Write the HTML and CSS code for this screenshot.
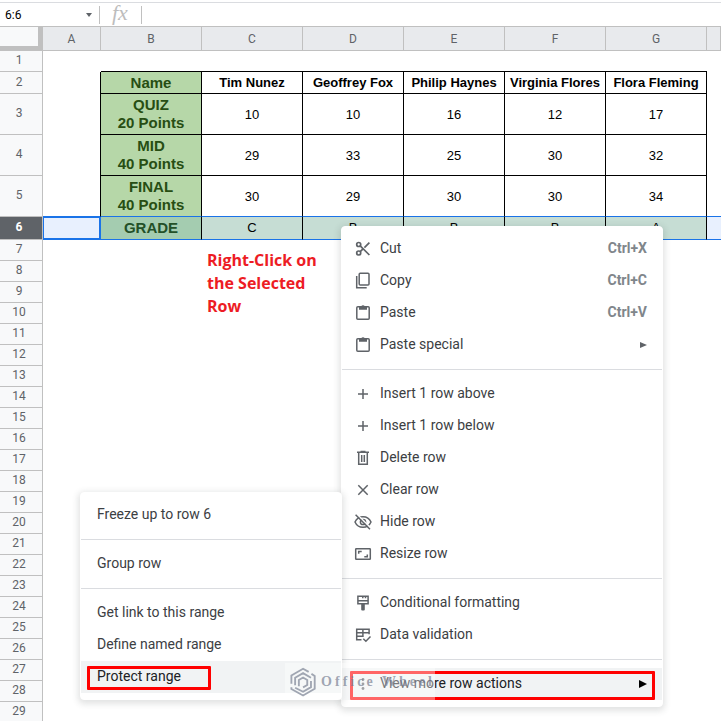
FILE: index.html
```html
<!DOCTYPE html>
<html lang="en">
<head>
<meta charset="utf-8">
<title>Grades</title>
<link rel="stylesheet" href="styles.css">
</head>
<body>
<div class="formula-bar">
  <label class="name-box"><input type="text" value="6:6" aria-label="Name box"><svg width="6" height="4" viewBox="0 0 6 4"><path d="M0 0h6L3 4z" fill="#5f6368"/></svg></label>
  <label class="fx" for="formula">fx</label>
  <input class="formula" id="formula" type="text">
</div>
<main class="sheet">
<table class="grid">
  <colgroup><col class="col-head"><col class="col-a"><col class="col"><col class="col"><col class="col"><col class="col"><col class="col"><col class="col"><col></colgroup>
  <thead>
    <tr><th class="corner"></th><th>A</th><th>B</th><th>C</th><th>D</th><th>E</th><th>F</th><th>G</th><th></th></tr>
  </thead>
  <tbody>
    <tr class="lead"><th>1</th><td></td><td></td><td></td><td></td><td></td><td></td><td></td><td></td></tr>
    <tr class="names"><th>2</th><td></td><td>Name</td><td>Tim Nunez</td><td>Geoffrey Fox</td><td>Philip Haynes</td><td>Virginia Flores</td><td>Flora Fleming</td><td></td></tr>
    <tr class="marks"><th>3</th><td></td><td>QUIZ<br>20 Points</td><td>10</td><td>10</td><td>16</td><td>12</td><td>17</td><td></td></tr>
    <tr class="marks"><th>4</th><td></td><td>MID<br>40 Points</td><td>29</td><td>33</td><td>25</td><td>30</td><td>32</td><td></td></tr>
    <tr class="marks last"><th>5</th><td></td><td>FINAL<br>40 Points</td><td>30</td><td>29</td><td>30</td><td>30</td><td>34</td><td></td></tr>
    <tr class="selected"><th>6</th><td></td><td>GRADE</td><td>C</td><td>B</td><td>B</td><td>B</td><td>A</td><td></td></tr>
    <tr><th>7</th><td colspan="8"></td></tr>
    <tr><th>8</th><td colspan="8"></td></tr>
    <tr><th>9</th><td colspan="8"></td></tr>
    <tr><th>10</th><td colspan="8"></td></tr>
    <tr><th>11</th><td colspan="8"></td></tr>
    <tr><th>12</th><td colspan="8"></td></tr>
    <tr><th>13</th><td colspan="8"></td></tr>
    <tr><th>14</th><td colspan="8"></td></tr>
    <tr><th>15</th><td colspan="8"></td></tr>
    <tr><th>16</th><td colspan="8"></td></tr>
    <tr><th>17</th><td colspan="8"></td></tr>
    <tr><th>18</th><td colspan="8"></td></tr>
    <tr><th>19</th><td colspan="8"></td></tr>
    <tr><th>20</th><td colspan="8"></td></tr>
    <tr><th>21</th><td colspan="8"></td></tr>
    <tr><th>22</th><td colspan="8"></td></tr>
    <tr><th>23</th><td colspan="8"></td></tr>
    <tr><th>24</th><td colspan="8"></td></tr>
    <tr><th>25</th><td colspan="8"></td></tr>
    <tr><th>26</th><td colspan="8"></td></tr>
    <tr><th>27</th><td colspan="8"></td></tr>
    <tr><th>28</th><td colspan="8"></td></tr>
    <tr><th>29</th><td colspan="8"></td></tr>
  </tbody>
</table>
</main>

<p class="note">Right-Click on<br>the Selected<br>Row</p>

<div class="menu context-menu">
  <button type="button"><svg viewBox="0 0 18 18"><g fill="none" stroke="#5f6368" stroke-width="1.7"><circle cx="4.700" cy="4.500" r="2"/><circle cx="4.700" cy="13" r="2"/><path d="M6.200 5.900 15.400 15M6.200 11.600 9 8.800M10.400 7.600 15.400 2.700"/></g></svg><span>Cut</span><kbd>Ctrl+X</kbd></button>
  <button type="button"><svg viewBox="0 0 18 18"><g fill="none" stroke="#5f6368" stroke-width="1.5"><rect x="5.200" y="1.300" width="9.800" height="11.600" rx="1"/><path d="M2.700 4v11.700h10"/></g></svg><span>Copy</span><kbd>Ctrl+C</kbd></button>
  <button type="button"><svg viewBox="0 0 18 18"><rect x="2.800" y="2.700" width="12.400" height="12.600" rx="1" fill="none" stroke="#5f6368" stroke-width="1.5"/><path d="M5 2.500h2.200a1.900 1.900 0 0 1 3.600 0H13v3.200H5z" fill="#5f6368"/></svg><span>Paste</span><kbd>Ctrl+V</kbd></button>
  <button type="button"><svg viewBox="0 0 18 18"><rect x="2.800" y="2.700" width="12.400" height="12.600" rx="1" fill="none" stroke="#5f6368" stroke-width="1.5"/><path d="M5 2.500h2.200a1.900 1.900 0 0 1 3.600 0H13v3.200H5z" fill="#5f6368"/></svg><span>Paste special</span><i class="arrow"></i></button>
  <hr>
  <button type="button"><svg viewBox="0 0 18 18"><path d="M9 4v10M4 9h10" stroke="#5f6368" stroke-width="1.5"/></svg><span>Insert 1 row above</span></button>
  <button type="button"><svg viewBox="0 0 18 18"><path d="M9 4v10M4 9h10" stroke="#5f6368" stroke-width="1.5"/></svg><span>Insert 1 row below</span></button>
  <button type="button"><svg viewBox="0 0 18 18"><g fill="none" stroke="#5f6368" stroke-width="1.5"><path d="M3 3.300h12M6.500 2.400h5M4.700 3.300v11.900h8.600V3.300M7.700 6v7M10.300 6v7"/></g></svg><span>Delete row</span></button>
  <button type="button"><svg viewBox="0 0 18 18"><path d="m4.300 4.300 9.400 9.400M13.700 4.300 4.300 13.700" stroke="#5f6368" stroke-width="1.5"/></svg><span>Clear row</span></button>
  <button type="button"><svg viewBox="0 0 18 18"><g fill="none" stroke="#5f6368" stroke-width="1.5"><path d="M1 9c1.500-3.400 4.600-5.300 8-5.300S15.500 5.600 17 9c-1.500 3.400-4.600 5.300-8 5.300S2.500 12.400 1 9z"/><circle cx="9" cy="9" r="2.600"/></g><path d="M3 1.200 17 15.200" stroke="#fff" stroke-width="1.500"/><path d="M1.600 1.800 16 16.200" stroke="#5f6368" stroke-width="1.500"/></svg><span>Hide row</span></button>
  <button type="button"><svg viewBox="0 0 18 18"><g fill="none" stroke="#5f6368" stroke-width="1.5"><rect x="1.700" y="3.700" width="14.600" height="10.600" rx=".6"/><path d="M4.700 8.700V6.500h3M13.300 9.400v2.300h-3"/></g></svg><span>Resize row</span></button>
  <hr>
  <button type="button"><svg viewBox="0 0 18 18"><g fill="none" stroke="#5f6368" stroke-width="1.500"><path d="M3.900 2.300h10.200v7.400H3.900zM3.900 6.700h10.200M8.800 2.300v2M11.500 2.300v2"/></g><path d="M7.200 10h3.600v5.400a1 1 0 0 1-1 1H8.200a1 1 0 0 1-1-1z" fill="#5f6368"/></svg><span>Conditional formatting</span></button>
  <button type="button"><svg viewBox="0 0 18 18"><g fill="none" stroke="#5f6368" stroke-width="1.500"><path d="M7.500 13.700H2.700V3.200h12.400v5M2.700 6.700h12.400M2.700 10.200h7M8.900 3.200v7M9.300 12.700l2.600 2.600 4.600-4.800"/></g></svg><span>Data validation</span></button>
  <hr>
  <button type="button" class="active"><svg viewBox="0 0 18 18"><g fill="#5f6368"><circle cx="9" cy="4.500" r="1.400"/><circle cx="9" cy="9" r="1.400"/><circle cx="9" cy="13.500" r="1.400"/></g></svg><span>View more row actions</span><i class="arrow"></i></button>
</div>

<div class="menu sub-menu">
  <button type="button">Freeze up to row 6</button>
  <hr>
  <button type="button">Group row</button>
  <hr>
  <button type="button">Get link to this range</button>
  <button type="button">Define named range</button>
  <button type="button" class="active">Protect range</button>
</div>

<div class="frame frame-protect"></div>
<div class="frame frame-more"></div>

<div class="watermark">
  <svg width="28" height="32" viewBox="0 0 28 32"><g fill="none" stroke="#a0a6b2" stroke-width="2"><path d="M1.500 18V9L14 1.800l6 3.400M1.500 21.500v2L14 30.500l12.500-7.200V9.500L23 7.300M5.500 19.500v-8L14 6.500l8.500 5M5.500 22.200 14 26.500l8.500-5V15M9.500 20.500v-6.700L14 11.200l4.500 2.600v5.400L14 21.800"/></g></svg>
  <span>Office Wheel</span>
</div>
</body>
</html>
```
FILE: styles.css
```css
* { box-sizing: border-box; }

body {
  margin: 0;
  position: relative;
  min-height: 100vh;
  overflow: hidden;
  background: #fff;
  color: #000;
  font-family: Roboto, "Liberation Sans", sans-serif;
}

input, button {
  border: 0;
  padding: 0;
  background: none;
  font: inherit;
  color: inherit;
  outline: 0;
}

.formula-bar {
  display: flex;
  align-items: center;
  height: 25px;
  margin-top: 2px;
  border-top: 1px solid #dadce0;
  border-bottom: 1px solid #c0c0c0;
}

.name-box {
  display: flex;
  align-items: center;
  width: 100px;
  height: 18px;
  padding: 0 7px 0 5px;
  border-right: 1px solid #c0c0c0;
  font-size: 12px;
}

.name-box input { flex: 1; min-width: 0; }

.fx {
  width: 42px;
  height: 18px;
  padding-left: 12px;
  border-right: 1px solid #c0c0c0;
  color: #bdbdbd;
  font: italic 22px/14px "Liberation Serif", serif;
}

.formula { flex: 1; min-width: 0; }

.grid {
  width: 100%;
  table-layout: fixed;
  border-collapse: separate;
  border-spacing: 0;
  font: 13px/18px "Liberation Sans", Arial, sans-serif;
}

.col-head { width: 43px; }
.col-a { width: 58px; }
.col { width: 101px; }

.grid tr { height: 21px; }
.grid thead tr { height: 24px; }
.grid .names { height: 22px; }
.grid .marks { height: 41px; }
.grid .selected { height: 23px; }

.grid th, .grid td {
  padding: 0;
  text-align: center;
  vertical-align: middle;
  white-space: nowrap;
}

.grid th {
  border-right: 1px solid #c0c0c0;
  border-bottom: 1px solid #c0c0c0;
  background: #f8f9fa;
  color: #5f6368;
  font: 12px/16px Roboto, sans-serif;
}

.grid thead th { background: #e8eaed; }
.grid tbody th { padding: 0 4px 2px 0; }

.grid thead .corner {
  border-right-width: 5px;
  border-bottom-width: 5px;
  background: #f8f9fa;
}

.lead td:nth-child(n+3):nth-child(-n+8) { border-bottom: 1px solid #000; }

.names td:nth-child(-n+8),
.marks td:nth-child(-n+8),
.selected td:nth-child(n+3):nth-child(-n+8) { border-right: 1px solid #000; }

.names td:nth-child(n+3):nth-child(-n+8),
.marks td:nth-child(n+3):nth-child(-n+8) { border-bottom: 1px solid #000; }

.names td { font-weight: bold; }
.grid .marks td:nth-child(n+4) { padding-top: 2px; }

.names td:nth-child(3), .marks td:nth-child(3), .selected td:nth-child(3) {
  background: #b6d7a8;
  color: #274e13;
  font-size: 15px;
  font-weight: bold;
}

.grid .last td:nth-child(n+2) { border-bottom: 1px solid #1a73e8; }

.grid .selected td {
  border-bottom: 1px solid #1a73e8;
  background: #e8f0fe;
}
.grid .selected td:nth-child(n+4):nth-child(-n+8) { background: #c6ddd4; }
.grid .selected td:nth-child(3) { background: #a4ccb0; color: #235028; }
.grid .selected td:nth-child(2) {
  border: 1px solid #1a73e8;
  border-right-width: 2px;
  border-bottom-width: 2px;
}
.grid .selected th {
  background: #5f6368;
  color: #fff;
  font-weight: bold;
}

.note {
  position: absolute;
  left: 207px;
  top: 249px;
  margin: 0;
  color: #ed1c24;
  font: bold 16px/23px "Open Sans", sans-serif;
}

.menu {
  position: absolute;
  padding: 6px 0;
  border: 1px solid #fff;
  border-radius: 4px;
  background: #fff;
  box-shadow: 0 2px 6px 2px rgba(60, 64, 67, .15);
  color: #3c4043;
  font-size: 14px;
  line-height: 20px;
}

.menu button {
  display: flex;
  align-items: center;
  width: 100%;
  height: 32px;
  padding: 0 15px 2px;
  text-align: left;
}

.menu hr {
  height: 1px;
  margin: 8px 0;
  border: 0;
  background: #dadce0;
}

.menu .active { background: #f1f3f4; color: #202124; }

.menu span { flex: 1; }

.menu svg {
  width: 18px;
  height: 18px;
  margin: 2px 8px 0 -3px;
}

.menu kbd {
  color: #80868b;
  font: bold 14px/20px Roboto, sans-serif;
}

.arrow {
  margin-top: 2px;
  border-left: 7px solid #5f6368;
  border-top: 3px solid transparent;
  border-bottom: 3px solid transparent;
}
.active .arrow {
  border-width: 4px 0 4px 8px;
  border-left-color: #000;
}

.context-menu { left: 341px; top: 226px; width: 322px; }
.sub-menu { left: 80px; top: 492px; width: 262px; }
.sub-menu button { padding-left: 16px; }

.frame {
  position: absolute;
  border: 3px solid #f00;
  border-radius: 1px;
}
.frame-protect { left: 87px; top: 666px; width: 124px; height: 24px; }
.frame-more { left: 350px; top: 671px; width: 305px; height: 29px; }

.watermark {
  position: absolute;
  left: 285px;
  top: 663px;
  display: flex;
  align-items: center;
  gap: 5px;
  width: 150px;
  height: 37px;
  padding-left: 5px;
  overflow: hidden;
  background: rgba(255, 255, 255, .4);
  color: rgba(110, 118, 138, .65);
  font: bold 14px/20px "Liberation Serif", serif;
  letter-spacing: 3px;
  white-space: nowrap;
  pointer-events: none;
}
```
